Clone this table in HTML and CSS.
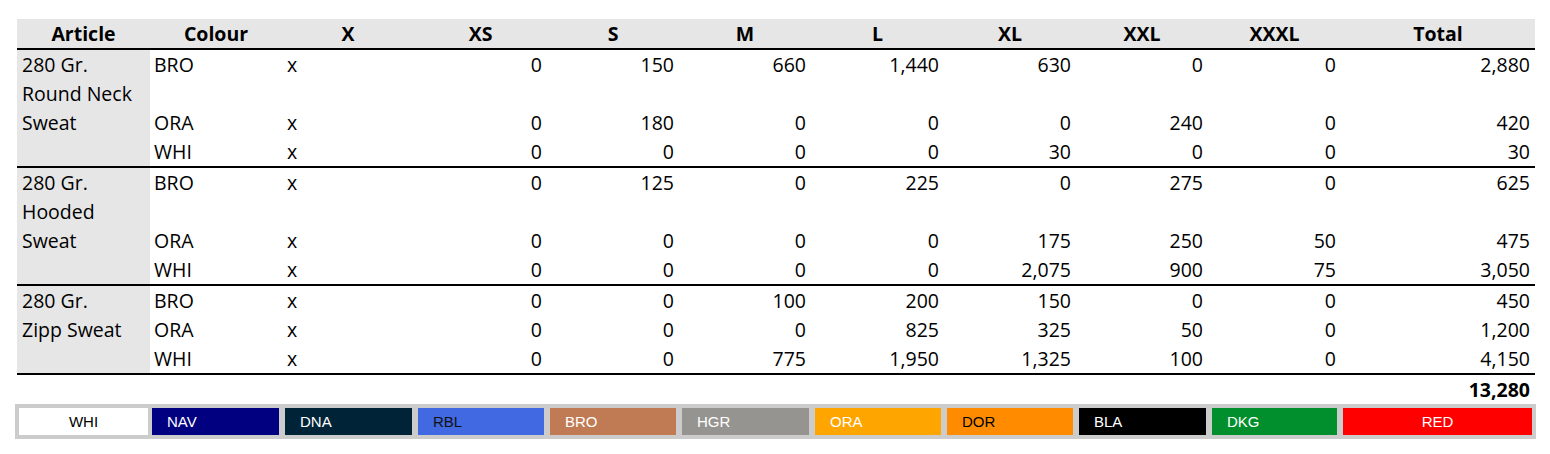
FILE: index.html
```html
<!DOCTYPE html>
<html lang="en">
<head>
<meta charset="utf-8">
<title>Sizes</title>
<link rel="stylesheet" href="styles.css">
</head>
<body>
<div class="page">
  <table class="grid">
    <colgroup>
      <col class="w133"><col class="w132"><col class="w132"><col class="w133"><col class="w132"><col class="w132"><col class="w133"><col class="w132"><col class="w132"><col class="w133"><col class="w194">
    </colgroup>
    <thead>
      <tr><th>Article</th><th>Colour</th><th>X</th><th>XS</th><th>S</th><th>M</th><th>L</th><th>XL</th><th>XXL</th><th>XXXL</th><th>Total</th></tr>
    </thead>
    <tbody>
      <tr class="tall"><td class="art" rowspan="3">280 Gr.<br>Round Neck<br>Sweat</td><td class="c">BRO</td><td class="x">x</td><td class="n">0</td><td class="n">150</td><td class="n">660</td><td class="n">1,440</td><td class="n">630</td><td class="n">0</td><td class="n">0</td><td class="n">2,880</td></tr>
      <tr><td class="c">ORA</td><td class="x">x</td><td class="n">0</td><td class="n">180</td><td class="n">0</td><td class="n">0</td><td class="n">0</td><td class="n">240</td><td class="n">0</td><td class="n">420</td></tr>
      <tr class="last"><td class="c">WHI</td><td class="x">x</td><td class="n">0</td><td class="n">0</td><td class="n">0</td><td class="n">0</td><td class="n">30</td><td class="n">0</td><td class="n">0</td><td class="n">30</td></tr>
    </tbody>
    <tbody>
      <tr class="tall"><td class="art" rowspan="3">280 Gr.<br>Hooded<br>Sweat</td><td class="c">BRO</td><td class="x">x</td><td class="n">0</td><td class="n">125</td><td class="n">0</td><td class="n">225</td><td class="n">0</td><td class="n">275</td><td class="n">0</td><td class="n">625</td></tr>
      <tr><td class="c">ORA</td><td class="x">x</td><td class="n">0</td><td class="n">0</td><td class="n">0</td><td class="n">0</td><td class="n">175</td><td class="n">250</td><td class="n">50</td><td class="n">475</td></tr>
      <tr class="last"><td class="c">WHI</td><td class="x">x</td><td class="n">0</td><td class="n">0</td><td class="n">0</td><td class="n">0</td><td class="n">2,075</td><td class="n">900</td><td class="n">75</td><td class="n">3,050</td></tr>
    </tbody>
    <tbody>
      <tr><td class="art" rowspan="3">280 Gr.<br>Zipp Sweat</td><td class="c">BRO</td><td class="x">x</td><td class="n">0</td><td class="n">0</td><td class="n">100</td><td class="n">200</td><td class="n">150</td><td class="n">0</td><td class="n">0</td><td class="n">450</td></tr>
      <tr><td class="c">ORA</td><td class="x">x</td><td class="n">0</td><td class="n">0</td><td class="n">0</td><td class="n">825</td><td class="n">325</td><td class="n">50</td><td class="n">0</td><td class="n">1,200</td></tr>
      <tr class="last"><td class="c">WHI</td><td class="x">x</td><td class="n">0</td><td class="n">0</td><td class="n">775</td><td class="n">1,950</td><td class="n">1,325</td><td class="n">100</td><td class="n">0</td><td class="n">4,150</td></tr>
    </tbody>
    <tfoot>
      <tr><td class="grand" colspan="11">13,280</td></tr>
    </tfoot>
  </table>
  <div class="legend">
    <div class="sw whi center">WHI</div>
    <div class="sw nav">NAV</div>
    <div class="sw dna">DNA</div>
    <div class="sw rbl">RBL</div>
    <div class="sw bro">BRO</div>
    <div class="sw hgr">HGR</div>
    <div class="sw ora">ORA</div>
    <div class="sw dor">DOR</div>
    <div class="sw bla">BLA</div>
    <div class="sw dkg">DKG</div>
    <div class="sw red center">RED</div>
  </div>
</div>
</body>
</html>
```

FILE: styles.css
```css
html, body {
  margin: 0;
  padding: 0;
  background: #ffffff;
}

.page {
  padding: 19px 0 0 15px;
  width: 1521px;
}

.grid {
  margin-left: 2px;
  width: 1518px;
  table-layout: fixed;
  border-collapse: separate;
  border-spacing: 0;
  font-family: "Open Sans", "Lato", sans-serif;
  font-size: 19.5px;
  color: #000;
}

.w133 { width: 133px; }
.w132 { width: 132px; }
.w194 { width: 194px; }

.grid th {
  background: #e6e6e6;
  font-weight: 700;
  text-align: center;
  line-height: 29px;
  height: 29px;
  padding: 0;
  border-bottom: 2px solid #000;
  white-space: nowrap;
}

.grid td {
  padding: 0 5px;
  line-height: 29px;
  height: 29px;
  vertical-align: top;
  white-space: nowrap;
}

.grid tr.tall td {
  height: 58px;
}

.grid td.art {
  background: #e6e6e6;
  padding-left: 5px;
  border-bottom: 2px solid #000;
}

.grid tr.last td {
  border-bottom: 2px solid #000;
}

.grid td.c {
  padding-left: 4px;
}

.grid td.x {
  padding-left: 5px;
}

.grid td.n {
  text-align: right;
}

.grid td.grand {
  text-align: right;
  font-weight: 700;
  vertical-align: middle;
}

.legend {
  display: grid;
  grid-template-columns: 127px 127px 127px 126px 126px 127px 126px 126px 127px 125px 189px;
  column-gap: 6px;
  padding: 4px;
  background: #cccccc;
  width: 1513px;
  font-family: "Liberation Sans", Arial, sans-serif;
  font-size: 15px;
}

.sw {
  height: 27px;
  line-height: 27px;
  padding-left: 15px;
  color: #fff;
}

.sw.center {
  padding-left: 0;
  text-align: center;
}

.whi { background: #ffffff; color: #000; width: 129px; }
.nav { background: #000080; }
.dna { background: #002338; }
.rbl { background: #4169e1; color: #111; }
.bro { background: #c07b55; }
.hgr { background: #959490; }
.ora { background: #ffa500; }
.dor { background: #ff8c00; color: #000; }
.bla { background: #000000; }
.dkg { background: #008f2c; }
.red { background: #ff0000; }
```
